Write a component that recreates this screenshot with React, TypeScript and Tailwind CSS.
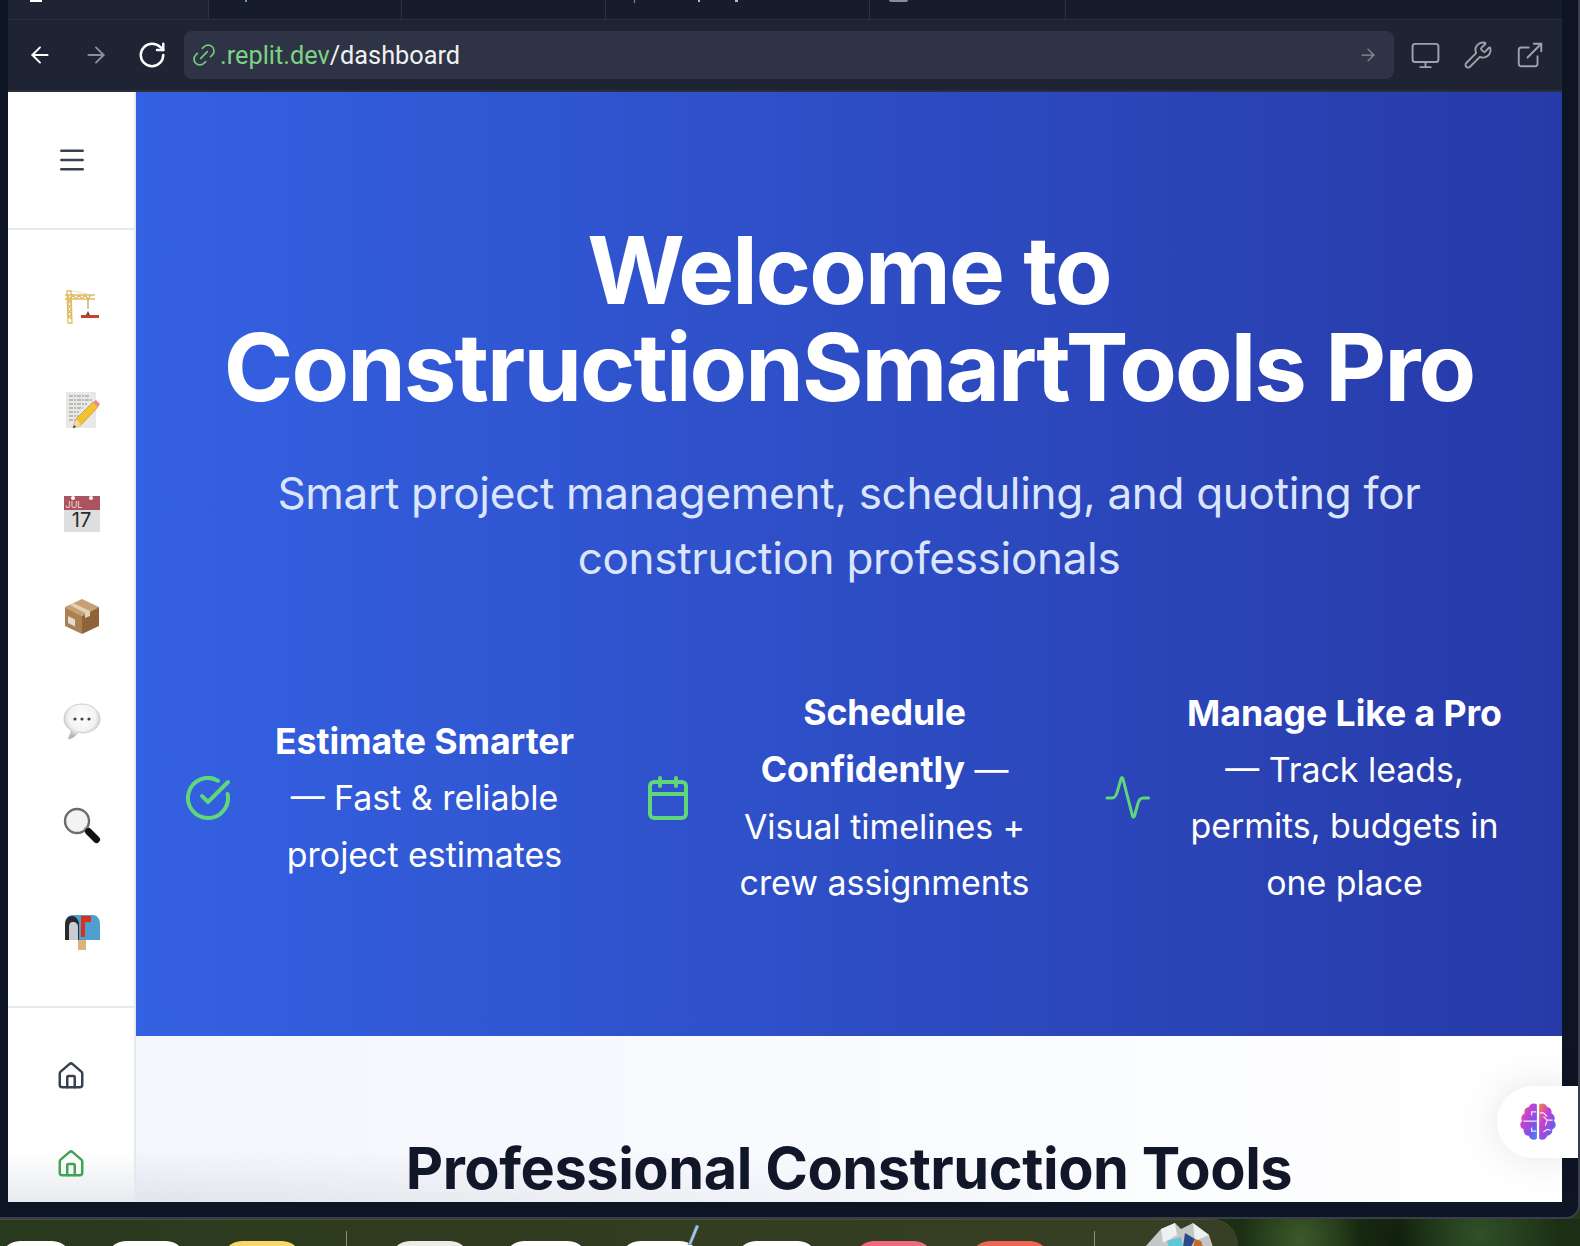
import React from "react";
import { ArrowLeft, ArrowRight, RotateCw, Link2, Monitor, Wrench, ExternalLink, Menu, Home, CircleCheckBig, Calendar } from "lucide-react";

function Crane() {
  return (
    <svg width="38" height="38" viewBox="0 0 38 38" className="-ml-[4px]">
      <g stroke="#e0bd62" strokeWidth="1.3" fill="none">
        <path d="M4 8h30M4 12h30M6 8l3 4 3-4 3 4 3-4 3 4 3-4 3 4 3-4" />
        <path d="M6 4h4l1 32H7zM6.500 12l4 5-4 5 4 5-4 5M10.500 12l-4 5 4 5-4 5 4 5" />
      </g>
      <path d="M8 3L30 8" stroke="#c9c9c9" strokeWidth="0.6" />
      <path d="M27 12v10" stroke="#b8a24c" strokeWidth="1.2" />
      <rect x="20" y="28" width="18" height="3" fill="#c8412a" />
      <path d="M27 24l-2 4h4z" fill="#555" />
    </svg>
  );
}
function Memo() {
  return (
    <svg width="38" height="38" viewBox="0 0 38 38">
      <rect x="3" y="1" width="30" height="36" fill="#e8e8e6" />
      <g stroke="#666" strokeWidth="0.7">
        <path d="M6 5h20M6 9h23M6 13h18M6 17h14M6 21h10M6 25h10M6 29h8" strokeDasharray="4 1 2 1" />
      </g>
      <path d="M30 11l5 5-17 18-8 3 3-9z" fill="#f2c230" stroke="#b98a18" strokeWidth="0.6" />
      <path d="M30 11l3-2 4 4-2 3z" fill="#e88a94" />
      <path d="M13 28l5 6-8 3z" fill="#f0d9a8" />
      <path d="M11 34l-1 3 3-1z" fill="#333" />
    </svg>
  );
}
function Cal() {
  return (
    <div className="relative w-[36px] h-[36px] bg-[#dedede] overflow-hidden">
      <div className="h-[14px] bg-[#a9545e] text-[9px] leading-[14px] text-[#eedcdc] pl-[2px] pt-[2px]">JUL</div>
      <div className="text-[#2b2b2b] text-[20px] leading-[20px] text-center font-['Inter',sans-serif]">17</div>
      <div className="absolute top-0 left-[7px] w-[4px] h-[4px] rounded-full bg-white" />
      <div className="absolute top-0 right-[7px] w-[4px] h-[4px] rounded-full bg-white" />
    </div>
  );
}
function Box() {
  return (
    <svg width="38" height="38" viewBox="0 0 38 38" className="-mt-[4px]">
      <path d="M2 10L19 2l17 8-17 9z" fill="#c9a074" />
      <path d="M2 10l17 9v18L2 29z" fill="#ab8052" />
      <path d="M36 10L19 19v18l17-8z" fill="#8f6438" />
      <path d="M10 6l17 8v5l-5 2v-5L7 8z" fill="#e3d2b5" />
      <path d="M5 19l7 3.500v7L5 26z" fill="#e5ddcf" />
    </svg>
  );
}
function Bubble() {
  return (
    <svg width="38" height="38" viewBox="0 0 38 38">
      <defs>
        <radialGradient id="bub" cx="50%" cy="38%" r="60%">
          <stop offset="0%" stopColor="#ffffff" />
          <stop offset="65%" stopColor="#f2f2f2" />
          <stop offset="100%" stopColor="#b4b4b4" />
        </radialGradient>
      </defs>
      <path d="M19 1C9 1 1 7 1 16c0 5 3 9 7 11 0 3-1 5-3 9 4 0 8-3 10-7 1 0 3 1 4 1 10 0 18-6 18-14S29 1 19 1z" fill="url(#bub)" stroke="#c4c4c4" strokeWidth="0.8" />
      <circle cx="12" cy="16" r="1.600" fill="#444" />
      <circle cx="19" cy="16" r="1.600" fill="#444" />
      <circle cx="26" cy="16" r="1.600" fill="#444" />
    </svg>
  );
}
function Magnifier() {
  return (
    <svg width="38" height="38" viewBox="0 0 38 38">
      <circle cx="14" cy="14" r="12" fill="#f3f3f3" stroke="#6b6b6b" strokeWidth="2.400" />
      <path d="M22 23l3-3" stroke="#888" strokeWidth="3.500" />
      <path d="M25.500 24.500l8 8" stroke="#111" strokeWidth="7" strokeLinecap="round" />
    </svg>
  );
}
function Mailbox() {
  return (
    <svg width="38" height="38" viewBox="0 0 38 38" className="mt-[4px]">
      <rect x="15" y="26" width="8" height="11" fill="#d6b67c" />
      <path d="M10 2h20c4 0 7 4 7 9v16H2V12C2 6 5 2 10 2z" fill="#4f9fd0" />
      <path d="M2 27V12C2 6 5 3 9 3s7 4 7 9v15z" fill="#2a2a2e" />
      <path d="M6 27V14c0-3 1-5 4-5s5 2 5 5v13z" fill="#c9ccd0" />
      <path d="M18 3h10v6h-6v15h-4z" fill="#d6321f" />
    </svg>
  );
}
function Emoji({ children }: { children: React.ReactNode }) {
  return <div className="h-[104px] w-full flex items-center justify-center pl-[21px]">{children}</div>;
}

function Pulse() {
  return (
    <svg width="48" height="48" viewBox="0 0 48 48" fill="none" stroke="currentColor" strokeWidth="3" strokeLinecap="round" strokeLinejoin="round" className="text-[#5fd67a] shrink-0">
      <path d="M3 24h5c3 0 4.500-3 5.500-7L17 5c.5-2 1.500-2 2 0l9.500 37c.5 1.500 1.500 1.500 2 0l3-11c1-5 3-7 6-7h5" />
    </svg>
  );
}

function Feature({ icon, title, rest }: { icon: React.ReactNode; title: string; rest: string }) {
  return (
    <div className="flex items-center gap-[32px]">
      {icon}
      <p className="text-center text-[33.900px] leading-[56.400px] text-white w-[322px]">
        <span className="font-bold text-[35.700px] tracking-[-0.1px]">{title}</span> {rest}
      </p>
    </div>
  );
}

function DockIcon({ w, bg, ml }: { w: string; bg: string; ml: string }) {
  return <div className={`${w} ${bg} ${ml} h-[40px] rounded-t-[20px] shrink-0`} />;
}

export default function App() {
  return (
    <div className="w-[1580px] h-[1246px] overflow-hidden flex flex-col bg-[#24381a] font-['Inter',sans-serif]">
      <div className="h-[1219px] flex shrink-0 bg-[#0d1423] border-b-2 border-r-2 border-[#3a3d4a] rounded-br-[14px] overflow-hidden">
        <div className="w-[8px] bg-[#0d1423] shrink-0" />
        <div className="flex-1 flex flex-col min-w-0 relative">
          <div className="h-[20px] bg-[#1e2433] flex items-start border-b border-[#2a3040] shrink-0 mr-[16px]">
            <div className="w-[200px] relative"><div className="absolute left-[22px] top-0 w-[12px] h-[2px] bg-white" /></div>
            <div className="w-[193px] h-[19px] bg-[#161c2b] border-l border-[#2d3342] relative"><div className="absolute left-[36px] top-0 w-[2px] h-[2px] bg-[#5fb06a]" /></div>
            <div className="w-[204px] h-[19px] bg-[#161c2b] border-l border-[#2d3342]" />
            <div className="w-[264px] h-[19px] bg-[#161c2b] border-l border-[#2d3342] relative">
              <div className="absolute left-[28px] top-0 w-px h-[3px] bg-[#5fb06a]" />
              <div className="absolute left-[92px] top-0 w-[2px] h-[2px] bg-[#bbb]" />
              <div className="absolute left-[129px] top-0 w-[3px] h-[2px] bg-[#bbb]" />
            </div>
            <div className="w-[197px] h-[19px] bg-[#161c2b] border-x border-[#2d3342] relative"><div className="absolute left-[19px] top-0 w-[19px] h-[2px] rounded-b-[2px] bg-[#888c94]" /></div>
            <div className="flex-1 h-[19px] bg-[#161c2b]" />
          </div>
          <div className="h-[72px] bg-[#1e2433] border-b-2 border-[#2a2e3b] flex items-center shrink-0 mr-[16px]">
            <div className="w-[176px] flex items-center shrink-0 pl-[19px] gap-[30px] text-white">
              <ArrowLeft size={26} strokeWidth={1.8} />
              <ArrowRight size={26} strokeWidth={1.8} className="text-[#8b8f99]" />
              <RotateCw size={30} strokeWidth={2} className="-ml-[2px]" />
            </div>
            <div className="w-[1210px] h-[48px] rounded-[8px] bg-[#2e3345] flex items-center px-[8px] text-[25.300px] shrink-0 font-['Roboto',sans-serif]">
              <Link2 size={28} strokeWidth={1.5} className="text-[#75c97c] -rotate-45 -ml-[2px] mr-[2px]" />
              <span className="text-[#7bd383] pt-[1px]">.replit.dev</span>
              <span className="text-[#f0f1f5] pt-[1px]">/dashboard</span>
              <ArrowRight size={20} strokeWidth={1.5} className="ml-auto mr-[8px] text-[#8d909a]" />
            </div>
            <div className="flex items-center pl-[16px] gap-[22px] text-[#a0a2aa]">
              <Monitor size={31} strokeWidth={1.5} />
              <Wrench size={30} strokeWidth={1.5} />
              <ExternalLink size={30} strokeWidth={1.5} />
            </div>
          </div>
          <div className="flex-1 flex min-h-0 relative mr-[16px]">
            <aside className="w-[128px] shrink-0 bg-white border-r-2 border-[#e5e8ee] flex flex-col relative">
              <div className="h-[138px] border-b-2 border-[#e5e8ee] flex items-center justify-center pl-[2px] text-[#374151] shrink-0">
                <Menu size={32} strokeWidth={1.9} />
              </div>
              <div className="h-[778px] border-b-2 border-[#e5e8ee] flex flex-col justify-center shrink-0">
                <Emoji><Crane /></Emoji>
                <Emoji><Memo /></Emoji>
                <Emoji><Cal /></Emoji>
                <Emoji><Box /></Emoji>
                <Emoji><Bubble /></Emoji>
                <Emoji><Magnifier /></Emoji>
                <Emoji><Mailbox /></Emoji>
              </div>
              <div className="absolute left-0 right-0 bottom-0 h-[50px] bg-gradient-to-b from-transparent to-[#e8eaef]" />
              <div className="flex flex-col items-center pt-[53px] gap-[58px] relative">
                <Home size={30} strokeWidth={2} className="text-[#374151]" />
                <Home size={30} strokeWidth={2} className="text-[#43a354]" />
              </div>
            </aside>
            <main className="flex-1 min-w-0 flex flex-col">
              <section className="h-[944px] shrink-0 bg-gradient-to-r from-[#3461e2] to-[#273aa8] text-center flex flex-col items-center pt-[130px]">
                <h1 className="text-white font-bold text-[94px] leading-[97px] tracking-[-1.9px] w-[1300px]">
                  Welcome to ConstructionSmartTools Pro
                </h1>
                <p className="mt-[45px] text-[#dbe5fe] text-[44px] leading-[64.500px] tracking-[-0.3px] w-[1200px]">
                  Smart project management, scheduling, and quoting for construction professionals
                </p>
                <div className="mt-[94px] flex items-center justify-center gap-[58px] w-full pr-[9px]">
                  <Feature icon={<CircleCheckBig size={48} strokeWidth={2} className="text-[#5fd67a] shrink-0" />} title="Estimate Smarter" rest="— Fast & reliable project estimates" />
                  <Feature icon={<Calendar size={48} strokeWidth={2} className="text-[#5fd67a] shrink-0" />} title="Schedule Confidently" rest="— Visual timelines + crew assignments" />
                  <Feature icon={<Pulse />} title="Manage Like a Pro" rest="— Track leads, permits, budgets in one place" />
                </div>
              </section>
              <section className="flex-1 min-h-0 overflow-hidden bg-gradient-to-r from-[#f3f6fd] to-white relative text-center pt-[100px]">
                <div className="absolute left-0 right-0 bottom-0 h-[50px] bg-gradient-to-b from-transparent to-[#e2e4ea] [mask-image:linear-gradient(to_right,black,transparent_70%)]" />
                <h2 className="relative text-[#111729] font-bold text-[57.700px] leading-[64px] tracking-[-0.45px]">Professional Construction Tools</h2>
              </section>
            </main>
          </div>
          <div className="h-[15px] shrink-0" />
          <div className="absolute right-0 top-[1086px] w-[81px] h-[72px] rounded-l-[36px] bg-white flex items-center justify-center shadow-[0_0_40px_rgba(0,0,0,0.1)]">
            <svg width="44" height="44" viewBox="0 0 24 24" fill="none">
              <defs>
                <linearGradient id="brain" x1="0" y1="0" x2="1" y2="1">
                  <stop offset="0%" stopColor="#f08a3c" />
                  <stop offset="35%" stopColor="#c940d0" />
                  <stop offset="70%" stopColor="#7a55e8" />
                  <stop offset="100%" stopColor="#3c8cf0" />
                </linearGradient>
              </defs>
              <path d="M11.400 2.500C9.800 1.400 7.600 2 7 3.800 5.300 4 4.200 5.600 4.700 7.200 3 8 2.400 10 3.300 11.500 1.600 13 2.300 15.500 4.200 16 3.900 18 5.300 19.500 7 19.500 7.600 21.500 10 22.400 11.400 21z" fill="url(#brain)" />
              <path d="M12.600 2.500C14.200 1.400 16.400 2 17 3.800 18.700 4 19.800 5.600 19.300 7.200 21 8 21.600 10 20.700 11.500 22.400 13 21.700 15.500 19.800 16 20.100 18 18.700 19.500 17 19.500 16.400 21.500 14 22.400 12.600 21z" fill="url(#brain)" />
              <path d="M4 11.500h7.400M11 6.500H8.500v2M11 17H8.500v-2M13 7h2l2 2M20 11h-3l-2-2M17 11l-1 3M15 17.500l2-1.500 2 .5" stroke="#fff" strokeWidth="0.7" opacity="0.85" />
            </svg>
          </div>
        </div>
      </div>
      <div className="flex-1 flex overflow-hidden bg-[radial-gradient(circle_at_1300px_20px,#3d5a2a_0,transparent_60px),radial-gradient(circle_at_1480px_15px,#2f5028_0,transparent_80px),radial-gradient(circle_at_1400px_25px,#101f0c_0,transparent_70px),linear-gradient(#1c2f14,#1c2f14)]">
        <div className="w-[1238px] shrink-0 bg-gradient-to-r from-[#2a3a1e] to-[#383f24] rounded-tr-[26px] border-t border-[#454c32] flex items-start pt-[21px] relative">
          <DockIcon w="w-[72px]" bg="bg-white" ml="ml-0" />
          <DockIcon w="w-[80px]" bg="bg-white" ml="ml-[34px]" />
          <DockIcon w="w-[80px]" bg="bg-[#f8d868]" ml="ml-[36px]" />
          <div className="w-px h-[20px] bg-[#8a8f7c] ml-[44px] -mt-[10px] shrink-0" />
          <DockIcon w="w-[80px]" bg="bg-[#ecebe8]" ml="ml-[43px]" />
          <DockIcon w="w-[84px]" bg="bg-white" ml="ml-[34px]" />
          <DockIcon w="w-[80px]" bg="bg-white" ml="ml-[32px]" />
          <DockIcon w="w-[82px]" bg="bg-white" ml="ml-[36px]" />
          <DockIcon w="w-[80px]" bg="bg-[#ee6a80]" ml="ml-[36px]" />
          <DockIcon w="w-[80px]" bg="bg-[#ee6552]" ml="ml-[36px]" />
          <div className="w-px h-[20px] bg-[#8a8f7c] ml-[44px] -mt-[10px] shrink-0" />
          <svg width="76" height="26" viewBox="0 0 76 26" className="ml-[44px] -mt-[20px] shrink-0">
            <path d="M6 26L22 8l14-6 6 6 12-6 16 12 4 12z" fill="#c4c6c8" />
            <path d="M22 8l14-6 2 12-14 8zM54 2l16 12-14 6z" fill="#eef0f2" />
            <path d="M28 20l14-4 2 10H30z" fill="#5fc8d8" />
            <path d="M46 12l10 6-4 8h-8z" fill="#2b4a8a" />
            <path d="M56 18l6 2 2 6H54z" fill="#c46a2a" />
          </svg>
          <svg width="14" height="22" viewBox="0 0 14 22" className="absolute left-[686px] top-[3px]">
            <path d="M2 22L10 2l3 1-8 19z" fill="#a8c8e8" stroke="#5a7a9a" strokeWidth="0.6" />
          </svg>
        </div>
      </div>
    </div>
  );
}
